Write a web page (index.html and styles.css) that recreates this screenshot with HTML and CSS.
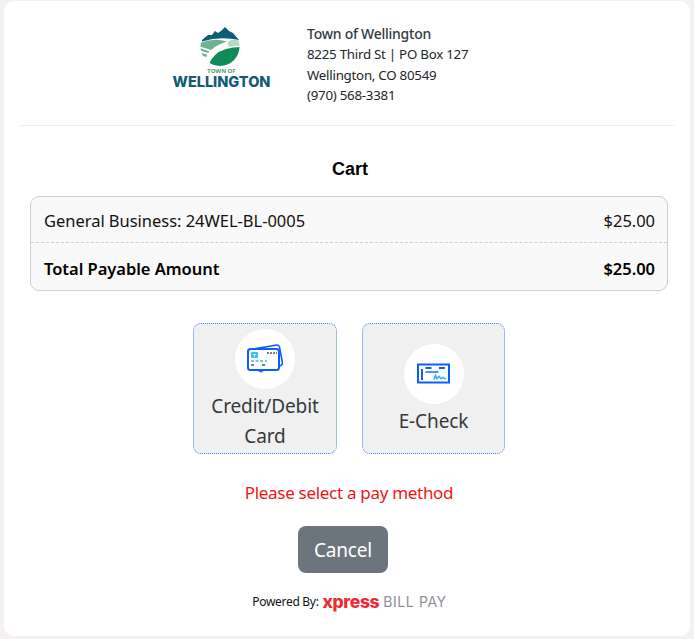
FILE: index.html
```html
<!DOCTYPE html>
<html lang="en">

<head>
    <meta charset="utf-8">
    <meta name="viewport" content="width=device-width, initial-scale=1.0">
    <title>Town of Wellington</title>
    <link rel="stylesheet" href="styles.css">
</head>

<body>
    <main class="kort">
        <header class="top">
            <div class="logo">
                <svg class="logo-mark" viewBox="0 0 40 40" width="40" height="40" aria-hidden="true">
                    <defs>
                        <clipPath id="rund">
                            <circle cx="20" cy="20.500" r="19.500"></circle>
                        </clipPath>
                    </defs>
                    <path d="M2 14 L8 9 L12 9 L15 5 L18 7 L21 5 L25 1 L29 5 L33 7 L39 14 Q20 10 2 15.500 Z" fill="#0f5c78"></path>
                    <g clip-path="url(#rund)">
                        <path d="M0 17 Q14 11.500 27 15.500 Q18 18 11 24 L0 20.500 Z" fill="#6fb08f"></path>
                        <path d="M29 15 Q34 13 40 14.500 L40 20 Q34 19.500 30 21 Q26 18 29 15 Z" fill="#b6d9c6"></path>
                        <path d="M0 22 L9.500 25.500 L8 27 L0 24.500 Z" fill="#6fb08f"></path>
                        <path d="M0 26.500 L7 28.500 L6.500 31 L0 29 Z" fill="#6fb08f"></path>
                        <path d="M8 41 Q12 27 26 23 Q33 21 40 21 L40 41 Z" fill="#0f8a58"></path>
                    </g>
                </svg>
                <span class="logo-lille">TOWN OF</span>
                <span class="logo-stor">WELLINGTON</span>
            </div>
            <address class="adresse">
                <strong>Town of Wellington</strong>
                <span>8225 Third St | PO Box 127</span>
                <span>Wellington, CO 80549</span>
                <span>(970) 568-3381</span>
            </address>
        </header>

        <h1 class="titel">Cart</h1>

        <section class="kurv">
            <div class="linje">
                <span>General Business: 24WEL-BL-0005</span>
                <span>$25.00</span>
            </div>
            <div class="linje total">
                <span>Total Payable Amount</span>
                <span>$25.00</span>
            </div>
        </section>

        <nav class="metoder">
            <button class="metode">
                <span class="ikon">
                    <svg viewBox="0 0 36 30" width="36" height="30" aria-hidden="true">
                        <path d="M6 5 L30 1 Q32 1 32.500 3 L35.500 19 Q35.500 21 33 22" fill="none" stroke="#0d5eff" stroke-width="1.600"></path>
                        <rect x="1" y="5" width="31" height="21" rx="2.500" fill="#fff" stroke="#0d5eff" stroke-width="2"></rect>
                        <path d="M10 26.500 L17 27.500 L14 28.500 Z" fill="#0d5eff"></path>
                        <rect x="4" y="8" width="7" height="6" rx="1" fill="#3fb6f7"></rect>
                        <path d="M6 10.500h3M7.500 10v3" stroke="#fff" stroke-width=".8"></path>
                        <path d="M20 9h2M23 9h2M26 9h2M29 9h1" stroke="#44597a" stroke-width="1.600"></path>
                        <path d="M4 17h3M8.500 17h3M13 17h3M18 17h2" stroke="#3fb6f7" stroke-width="1.400"></path>
                        <path d="M4 21h3M15 21h3" stroke="#44597a" stroke-width="1.600"></path>
                    </svg>
                </span>
                <span>Credit/Debit Card</span>
            </button>
            <button class="metode smal">
                <span class="ikon">
                    <svg viewBox="0 0 34 22" width="34" height="22" aria-hidden="true">
                        <rect x="1" y="1.500" width="31" height="18" fill="#fff" stroke="#0d5eff" stroke-width="2"></rect>
                        <path d="M5 6v11" stroke="#0d5eff" stroke-width="2"></path>
                        <path d="M8.500 5h6M22 5h6" stroke="#0d5eff" stroke-width="2"></path>
                        <path d="M8.500 9h13" stroke="#0d5eff" stroke-width="1.400"></path>
                        <path d="M17 16.500 L18.500 12.500 L20 15.500 L22 13.500 L24 15.500 L26 14.500 L29 16" fill="none" stroke="#3fb6f7" stroke-width="1.800"></path>
                    </svg>
                </span>
                <span>E-Check</span>
            </button>
        </nav>

        <p class="fejl">Please select a pay method</p>

        <button class="annuller">Cancel</button>

        <footer class="fod">
            <span class="powered">Powered By:</span>
            <span class="xpress">xpress</span>
            <span class="billpay">BILL PAY</span>
        </footer>
    </main>
</body></html>
```

FILE: styles.css
```css
* {
    box-sizing: border-box;
}

body {
    margin: 0;
    padding: 1px 4px 3px;
    background-color: #f5f0f1;
    font-family: "Noto Sans", "Liberation Sans", sans-serif;
    color: #212529;
}

.kort {
    height: 635px;
    background-color: #fff;
    border-radius: 10px;
    padding: 0 16px;
    display: flex;
    flex-direction: column;
    align-items: center;
}

.top {
    align-self: stretch;
    height: 125px;
    border-bottom: 1px solid #eeeeee;
    display: flex;
    justify-content: flex-start;
    align-items: flex-start;
    gap: 37px;
    padding-top: 22px;
    padding-left: 153px;
}

.logo {
    width: 97px;
    flex: none;
    display: flex;
    flex-direction: column;
    align-items: center;
    margin-top: 3px;
}

.logo-mark {
    display: block;
    margin-right: 3px;
}

.logo-lille {
    font-size: 6px;
    line-height: 7px;
    font-weight: 700;
    color: #4f9a6d;
    margin-top: 2px;
}

.logo-stor {
    font-family: "Inter", sans-serif;
    font-size: 14.500px;
    line-height: 14px;
    font-weight: 800;
    letter-spacing: 0;
    color: #0f5c78;
}

.adresse {
    font-style: normal;
    display: flex;
    flex-direction: column;
    font-size: 13.300px;
    line-height: 20.500px;
    letter-spacing: -.25px;
}

.adresse strong {
    font-size: 14px;
    font-weight: 500;
    line-height: 21px;
    color: #343a40;
}

.titel {
    font-family: "Liberation Sans", sans-serif;
    font-size: 18px;
    line-height: 22px;
    font-weight: 700;
    color: #000;
    margin: 32px 0 16px 6px;
}

.kurv {
    width: 638px;
    margin-left: 4px;
    border: 1px solid #cfcfcf;
    border-radius: 9px;
    background-color: #f9f9f9;
}

.linje {
    display: flex;
    justify-content: space-between;
    align-items: center;
    height: 45px;
    padding: 2px 12px 0 13px;
    font-size: 16.500px;
    letter-spacing: -.03px;
    color: #111;
}

.total {
    height: 48px;
    padding-top: 4px;
    border-top: 1px dashed #cfcfcf;
    font-weight: 600;
    color: #000;
}

.metoder {
    display: flex;
    gap: 25px;
    margin-top: 32px;
    margin-left: 4px;
}

.metode {
    width: 144px;
    height: 131px;
    border: 1px dotted #4a86ee;
    border-radius: 8px;
    background-color: #f0f0f0;
    font: inherit;
    font-size: 19px;
    line-height: 30px;
    letter-spacing: -.1px;
    color: #343a40;
    padding: 5px 14px 2px;
    display: flex;
    flex-direction: column;
    align-items: center;
    justify-content: center;
}

.smal {
    width: 143px;
}

.ikon {
    width: 60px;
    height: 60px;
    flex: none;
    border-radius: 50%;
    background-color: #fff;
    display: flex;
    align-items: center;
    justify-content: center;
    margin-bottom: 2px;
}

.fejl {
    font-size: 17px;
    line-height: 24px;
    letter-spacing: -.3px;
    color: #f01515;
    margin: 27px 0 0 4px;
}

.annuller {
    width: 90px;
    height: 47px;
    margin-top: 21px;
    margin-left: -8px;
    border: 0;
    border-radius: 8px;
    background-color: #6c757d;
    color: #fff;
    font: inherit;
    font-size: 19px;
    letter-spacing: -.2px;
}

.fod {
    display: flex;
    align-items: center;
    gap: 4px;
    margin-top: 18px;
    margin-left: 5px;
    height: 20px;
}

.powered {
    font-size: 12px;
    letter-spacing: -.3px;
    color: #111;
}

.xpress {
    font-family: "Inter", sans-serif;
    font-size: 17.500px;
    font-weight: 800;
    letter-spacing: -.4px;
    color: #ee2a36;
}

.billpay {
    font-family: "Inter", sans-serif;
    font-size: 14px;
    letter-spacing: .6px;
    color: #8d9298;
}
```
